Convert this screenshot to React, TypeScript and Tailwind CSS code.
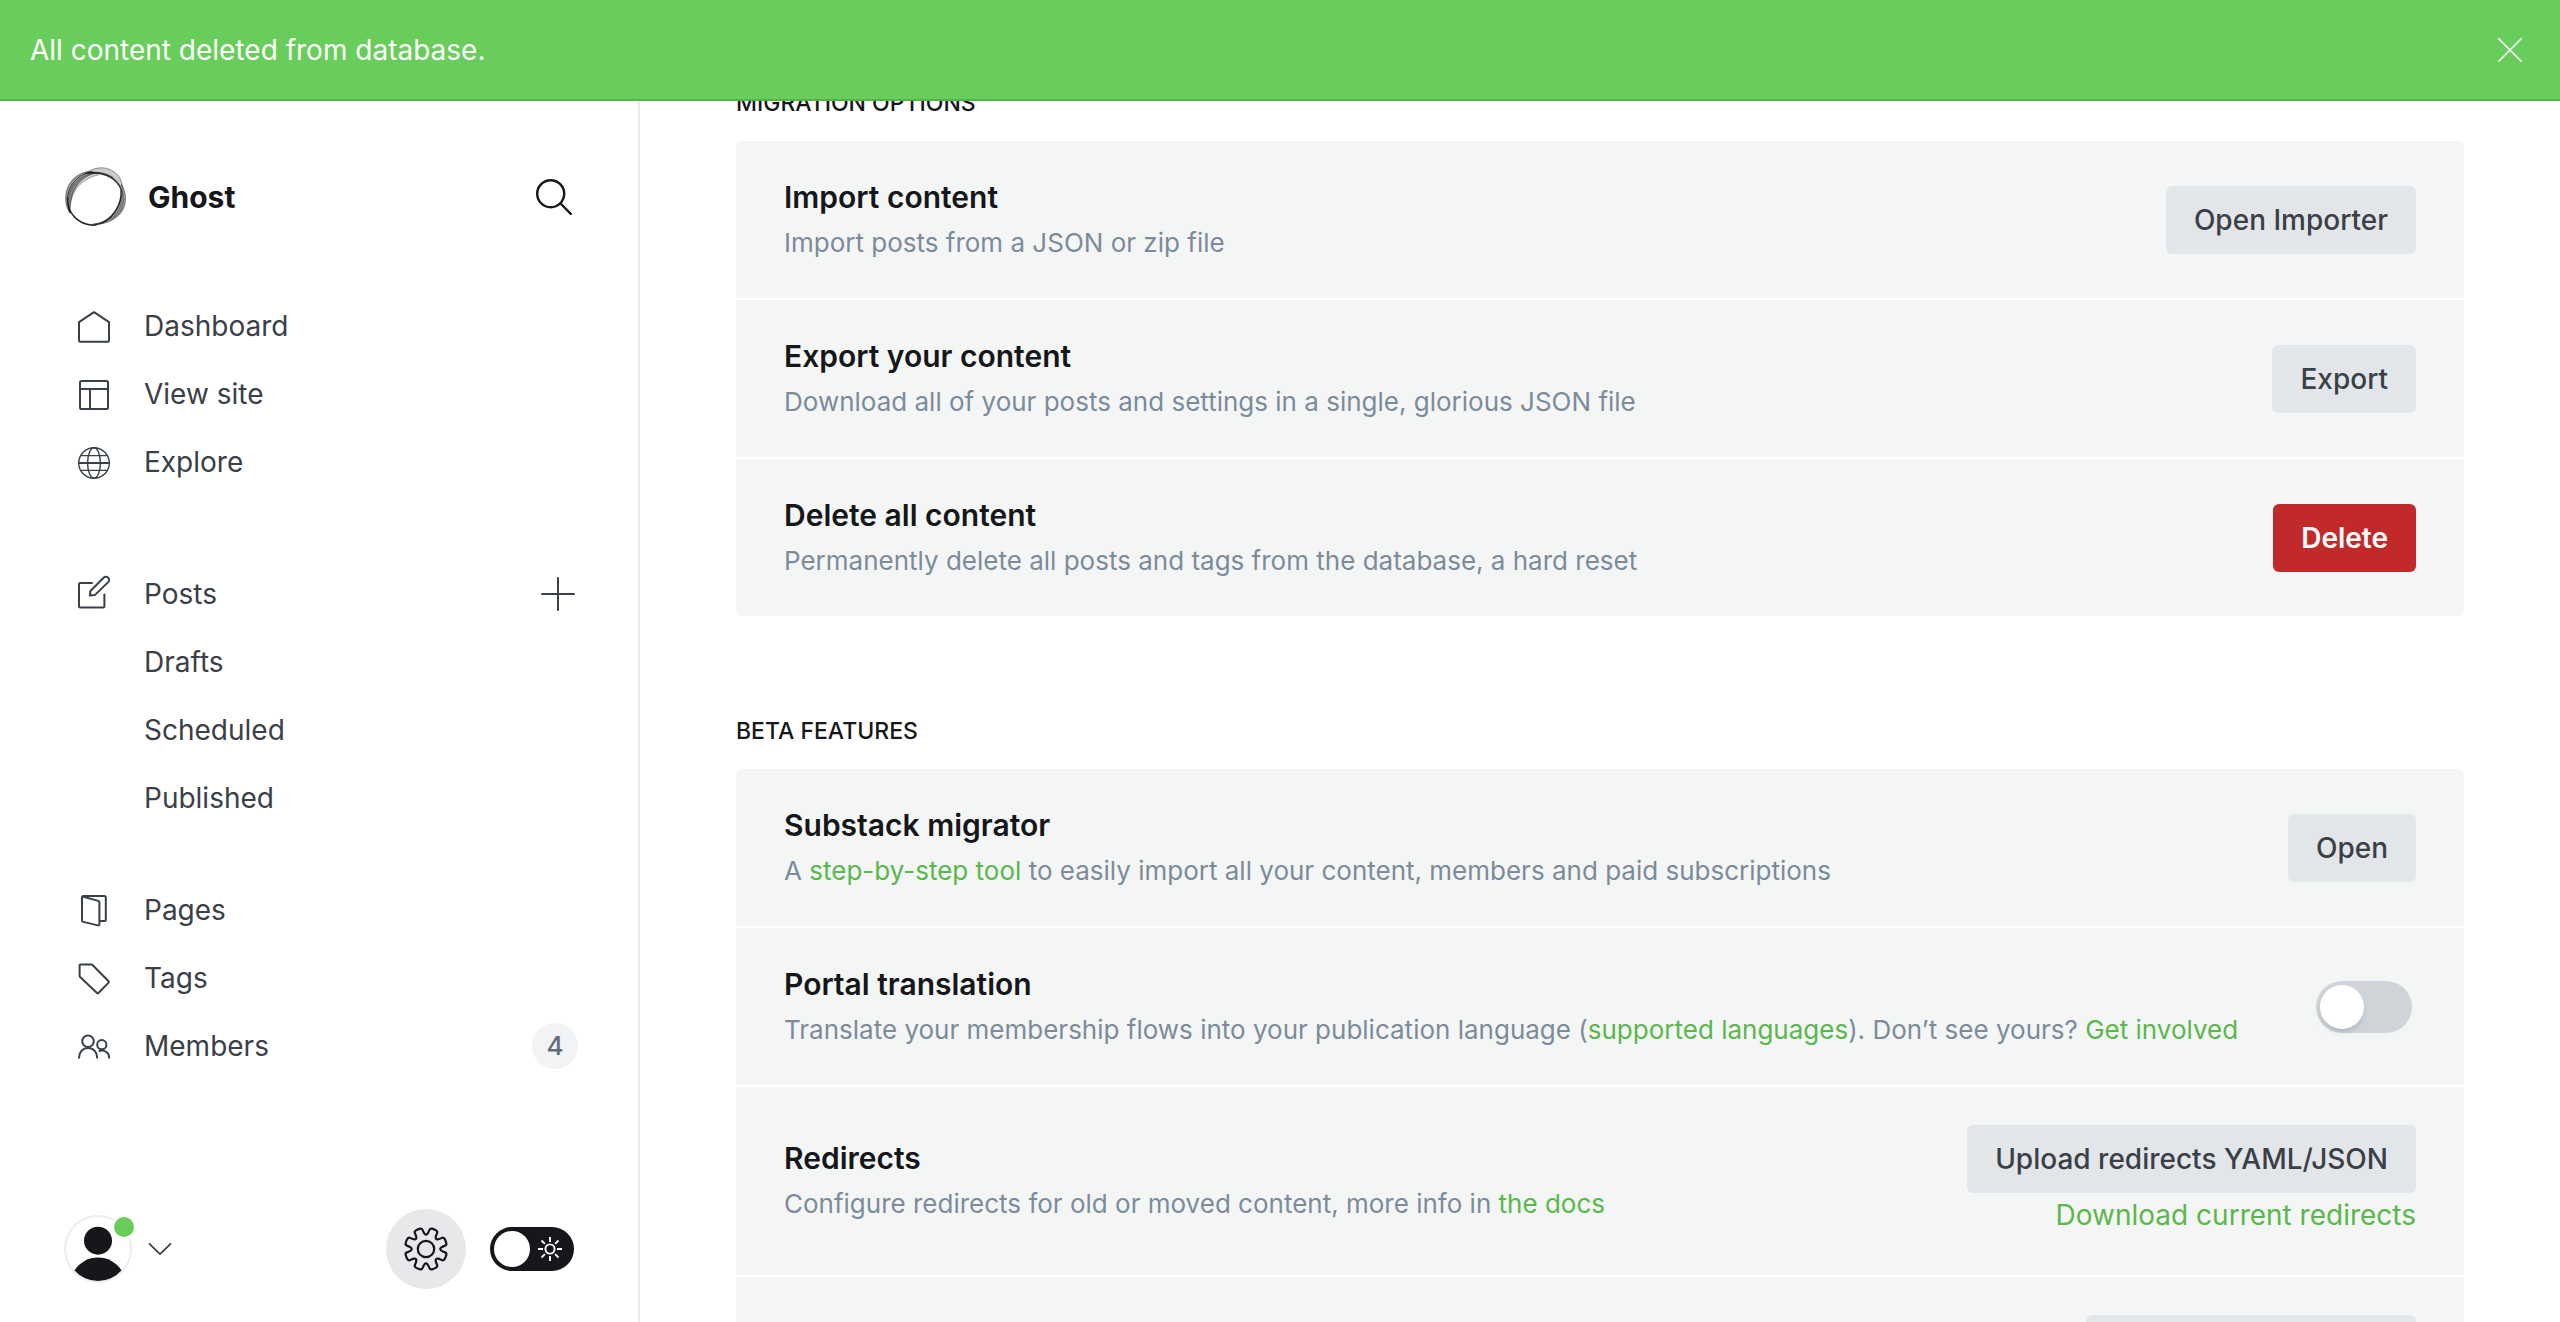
import React, { useState } from "react";

type IconProps = { children: React.ReactNode };

function NavIcon({ children }: IconProps) {
  return (
    <svg
      viewBox="0 0 32 32"
      className="size-8 shrink-0 overflow-visible"
      fill="none"
      stroke="currentColor"
      strokeWidth="2"
      strokeLinecap="round"
      strokeLinejoin="round"
      aria-hidden="true"
    >
      {children}
    </svg>
  );
}

const HomeIcon = (
  <NavIcon>
    <path d="M16 2.2 31 12.2V30.6a1.2 1.2 0 0 1-1.2 1.2H2.2A1.2 1.2 0 0 1 1 30.6V12.2Z" />
  </NavIcon>
);
const LayoutIcon = (
  <NavIcon>
    <rect x="2" y="3" width="28" height="28" rx="1.6" />
    <path d="M2 11h28M12 11v20" />
  </NavIcon>
);
const GlobeIcon = (
  <NavIcon>
    <g strokeWidth="1.4">
      <circle cx="16" cy="17" r="15.3" />
      <ellipse cx="16" cy="17" rx="6.4" ry="15.3" />
      <path d="M2.6 9.6h26.8M2.6 24.4h26.8" />
    </g>
    <path d="M.8 17h30.4" />
  </NavIcon>
);
const EditIcon = (
  <NavIcon>
    <path d="M14 5H2.2A1.2 1.2 0 0 0 1 6.2v22a1.2 1.2 0 0 0 1.2 1.2h23a1.2 1.2 0 0 0 1.2-1.2V16.6" />
    <path d="M11.8 17.6l.6-4.6L25.6-.3a3.1 3.1 0 0 1 4.6 4.4L16.8 17.1Z" />
  </NavIcon>
);
const PagesIcon = (
  <NavIcon>
    <path d="M5.4 2.8 20.2 6.9a1.6 1.6 0 0 1 1.2 1.5v22a1.1 1.1 0 0 1-1.4 1L5.2 27.9A1.6 1.6 0 0 1 4 26.3V3.6A1.6 1.6 0 0 1 5.6 2h20.6a1.6 1.6 0 0 1 1.6 1.6v21.8a1.6 1.6 0 0 1-1.6 1.6h-4.6" />
  </NavIcon>
);
const TagIcon = (
  <NavIcon>
    <path d="M2.6 2.5h10.8a1.5 1.5 0 0 1 1.1.5L30.6 19.2a1 1 0 0 1 0 1.4L20.4 31a1 1 0 0 1-1.4 0L2.1 15a1.5 1.5 0 0 1-.5-1.1V3.5a1 1 0 0 1 1-1Z" />
  </NavIcon>
);
const MembersIcon = (
  <NavIcon>
    <circle cx="10" cy="11.3" r="5.8" />
    <circle cx="23.8" cy="14.7" r="4.6" />
    <path d="M1 27.7c0-5.6 3.9-9.6 9.1-9.6s9.1 4 9.1 9.6M21.4 20.9c5.4-1.2 9.7 1.8 9.7 6.8" />
  </NavIcon>
);

function SiteLogo() {
  return (
    <svg viewBox="0 0 64 64" className="size-16 shrink-0" fill="none" stroke="#15171a" strokeLinecap="round" aria-hidden="true">
      <g fill="#15171a" strokeWidth="0.7">
        {/* left crescent */}
        <path
          fillOpacity="0.42"
          strokeOpacity="0.7"
          d="M28 6.500C14 6 2 17 1.700 33c0 7 1.500 11 4.300 15C5 31 12 13 30 8.500Z"
        />
        <path
          fillOpacity="0.22"
          strokeOpacity="0.5"
          d="M31 8C14 10 4 22 4 38c0 3 .5 6 2 10C5.500 31 13 15 34 10Z"
        />
        {/* upper right lobe */}
        <path
          fillOpacity="0.22"
          strokeOpacity="0.6"
          d="M21 8.500C30 2 40 1 48 5.500c7 4 10 9 10 17C50 11 38 6.500 21 8.500Z"
        />
        {/* lower right lobe */}
        <path
          fillOpacity="0.42"
          strokeOpacity="0.6"
          d="M58 20c6 11 4 22-2 29-7 7-16 11-27 10 14-1 30-13 29-39Z"
        />
        <path
          fillOpacity="0.15"
          strokeOpacity="0.4"
          d="M57.500 24c2 13-2 23-11 31 10-5 17-15 11-31Z"
        />
      </g>
      <path strokeWidth="1.500" strokeOpacity="0.85" d="M24 7.800c13-.6 27 3 33 16.200 1.500 14-8 34-27 36C14 60 3 48 3.500 33" />
      <path strokeWidth="1" strokeOpacity="0.7" d="M3.500 33C4 22 12 10 26 7.500c8-1 17 1 23 5M5 44c6 11 15 17 27 16.500" />
    </svg>
  );
}

/* Eight-toothed outline, smoothed through the midpoints of its corner points. */
function gearPath() {
  const pts: [number, number][] = [];
  for (let i = 0; i < 8; i++) {
    const mid = 22.5 + i * 45;
    const corners: [number, number][] = [
      [16.4, mid - 14],
      [21.2, mid - 12],
      [21.4, mid],
      [21.2, mid + 12],
      [16.4, mid + 14],
      [13.6, mid + 22.5],
    ];
    corners.forEach(([r, deg]) => {
      const a = (deg * Math.PI) / 180;
      pts.push([20 + r * Math.sin(a), 20 - r * Math.cos(a)]);
    });
  }
  const half = (a: [number, number], b: [number, number]) =>
    `${((a[0] + b[0]) / 2).toFixed(2)} ${((a[1] + b[1]) / 2).toFixed(2)}`;
  let d = `M${half(pts[pts.length - 1], pts[0])}`;
  pts.forEach((p, i) => {
    d += `Q${p[0].toFixed(2)} ${p[1].toFixed(2)} ${half(p, pts[(i + 1) % pts.length])}`;
  });
  return d + "Z";
}
const GEAR = gearPath();

function NavItem({ icon, label, children }: { icon?: React.ReactNode; label: string; children?: React.ReactNode }) {
  return (
    <li className="flex h-[68px] items-center pl-[14px]">
      <a href="#" className="flex flex-1 items-center gap-[34px]">
        {icon ?? <span className="w-8 shrink-0" />}
        {label}
      </a>
      {children}
    </li>
  );
}

function Sidebar() {
  const [night, setNight] = useState(false);
  return (
    <aside className="flex h-full w-[640px] shrink-0 flex-col border-r-2 border-[#e6e8ea] pt-[165px] pb-[33px] pl-16 text-[#394047]">
      <div className="flex items-center gap-5 pr-16">
        <SiteLogo />
        <span className="flex-1 text-[30px] font-bold text-[#15171a]">Ghost</span>
        <button type="button" aria-label="Search" className="flex size-10 items-center justify-center text-[#15171a]">
          <svg viewBox="0 0 36 36" className="size-9" fill="none" stroke="currentColor" strokeWidth="2.4" strokeLinecap="round">
            <circle cx="14.700" cy="14.700" r="13.500" />
            <path d="M24.500 24.500 34.800 34.800" />
          </svg>
        </button>
      </div>

      <nav className="mt-[63px] pr-[60px] text-[28px] leading-10">
        <ul>
          <NavItem icon={HomeIcon} label="Dashboard" />
          <NavItem icon={LayoutIcon} label="View site" />
          <NavItem icon={GlobeIcon} label="Explore" />
        </ul>
        <ul className="mt-16">
          <NavItem icon={EditIcon} label="Posts">
            <button type="button" aria-label="New post" className="flex size-10 items-center justify-center">
              <svg viewBox="0 0 34 34" className="size-[34px]" fill="none" stroke="currentColor" strokeWidth="2" strokeLinecap="round">
                <path d="M17 1v32M1 17h32" />
              </svg>
            </button>
          </NavItem>
          <NavItem label="Drafts" />
          <NavItem label="Scheduled" />
          <NavItem label="Published" />
        </ul>
        <ul className="mt-11">
          <NavItem icon={PagesIcon} label="Pages" />
          <NavItem icon={TagIcon} label="Tags" />
          <NavItem icon={MembersIcon} label="Members">
            <span className="flex size-[46px] items-center justify-center rounded-full bg-[#f1f3f4] text-[26px] font-medium text-[#626d79]">
              4
            </span>
          </NavItem>
        </ul>
      </nav>

      <div className="mt-auto flex items-center pr-16">
        <button type="button" aria-label="Account menu" className="flex items-center gap-4">
          <span className="relative">
            <svg viewBox="0 0 68 68" className="size-[68px]" aria-hidden="true">
              <circle cx="34" cy="34" r="33" fill="#fff" stroke="#ebedee" strokeWidth="2" />
              <circle cx="34" cy="25.700" r="14" fill="#15171a" />
              <path d="M10.500 55.500A27.700 27.700 0 0 1 57.500 55.500A31.500 31.500 0 0 1 10.500 55.500Z" fill="#15171a" />
            </svg>
            <span className="absolute top-0 -right-1 size-6 rounded-full border-2 border-white bg-[#69cd5b]" />
          </span>
          <svg viewBox="0 0 24 12" className="h-3 w-6" fill="none" stroke="#394047" strokeWidth="1.700" strokeLinecap="round" strokeLinejoin="round" aria-hidden="true">
            <path d="M1.500 .8 12 11.200 22.500 .8" />
          </svg>
        </button>
        <a href="#" aria-label="Settings" className="ml-auto flex size-20 items-center justify-center rounded-full bg-[#e7e8ea]">
          <svg viewBox="0 0 40 40" className="size-10 overflow-visible" fill="none" stroke="#15171a" strokeWidth="2.200" strokeLinejoin="round">
            <path d={GEAR} />
            <circle cx="20" cy="20" r="8.200" />
          </svg>
        </a>
        <label className="relative ml-6 flex h-11 w-[84px] items-center justify-between rounded-full bg-[#15171a] pr-3 pl-1">
          <input
            type="checkbox"
            aria-label="Night mode"
            checked={night}
            onChange={() => setNight(!night)}
            className="absolute inset-0 size-full cursor-pointer appearance-none"
          />
          <span className="size-9 rounded-full bg-white" />
          <svg viewBox="0 0 24 24" className="size-6" fill="none" stroke="#fff" strokeWidth="1.900" aria-hidden="true">
            <circle cx="12" cy="12" r="4.600" />
            <path d="M12 0v5M12 19v5M0 12h5M19 12h5M3.500 3.500l3.400 3.400M17.100 17.100l3.400 3.400M3.500 20.500l3.400-3.400M17.100 6.900l3.400-3.400" />
          </svg>
        </label>
      </div>
    </aside>
  );
}

function Section({ title, children }: { title: string; children: React.ReactNode }) {
  return (
    <section>
      <h2 className="mb-6 text-[23px] leading-7 font-medium text-[#15171a] uppercase">{title}</h2>
      <div className="flex flex-col gap-0.5 overflow-hidden rounded-md">{children}</div>
    </section>
  );
}

function Row({ title, text, children }: { title: string; text: React.ReactNode; children: React.ReactNode }) {
  return (
    <div className="flex min-h-[157px] items-center justify-between gap-12 bg-[#f4f6f6] px-12 py-8">
      <div>
        <h3 className="text-[30px] leading-[46px] font-semibold text-[#15171a]">{title}</h3>
        <p className="text-[26px] leading-[46px] text-[#7c8b9a]">{text}</p>
      </div>
      <div className="flex shrink-0 flex-col items-end py-1.5">{children}</div>
    </div>
  );
}

function Button({ children, danger = false }: { children: React.ReactNode; danger?: boolean }) {
  return (
    <button
      type="button"
      className={
        "h-[68px] rounded-md px-7 text-[28px] " +
        (danger ? "bg-[#c22a2a] font-semibold text-white" : "bg-[#e3e6e9] font-medium text-[#394047]")
      }
    >
      {children}
    </button>
  );
}

function Link({ children }: { children: React.ReactNode }) {
  return (
    <a href="#" className="text-[#5ab74c]">
      {children}
    </a>
  );
}

export default function App() {
  const [translate, setTranslate] = useState(false);
  return (
    <div className="relative flex h-screen overflow-hidden bg-white font-['Inter',sans-serif]">
      <div
        role="status"
        className="absolute inset-x-0 top-0 z-10 flex h-[101px] items-center justify-between border-b-2 border-[#56b249] bg-[#69cd5b] pr-9 pl-[30px] text-[28px] text-white"
      >
        <span>All content deleted from database.</span>
        <button type="button" aria-label="Close" className="flex size-7 items-center justify-center">
          <svg viewBox="0 0 24 24" className="size-6" fill="none" stroke="currentColor" strokeWidth="1.600" strokeLinecap="round">
            <path d="M.8 .8 23.200 23.200M23.200 .8 .8 23.200" />
          </svg>
        </button>
      </div>

      <Sidebar />

      <main className="flex min-w-0 flex-1 flex-col gap-[101px] px-24 pt-[89px]">
        <Section title="Migration options">
          <Row title="Import content" text="Import posts from a JSON or zip file">
            <Button>Open Importer</Button>
          </Row>
          <Row
            title="Export your content"
            text="Download all of your posts and settings in a single, glorious JSON file"
          >
            <Button>Export</Button>
          </Row>
          <Row title="Delete all content" text="Permanently delete all posts and tags from the database, a hard reset">
            <Button danger>Delete</Button>
          </Row>
        </Section>

        <Section title="Beta features">
          <Row
            title="Substack migrator"
            text={
              <>
                A <Link>step-by-step tool</Link> to easily import all your content, members and paid subscriptions
              </>
            }
          >
            <Button>Open</Button>
          </Row>
          <Row
            title="Portal translation"
            text={
              <>
                Translate your membership flows into your publication language (<Link>supported languages</Link>).
                Don’t see yours? <Link>Get involved</Link>
              </>
            }
          >
            <input
              type="checkbox"
              role="switch"
              aria-label="Portal translation"
              checked={translate}
              onChange={() => setTranslate(!translate)}
              className="mr-1 h-[52px] w-24 cursor-pointer appearance-none rounded-full bg-[#ced4d8] p-1 before:block before:size-11 before:rounded-full before:bg-white before:shadow-md before:content-[''] checked:bg-[#69cd5b] checked:before:ml-auto"
            />
          </Row>
          <Row
            title="Redirects"
            text={
              <>
                Configure redirects for old or moved content, more info in <Link>the docs</Link>
              </>
            }
          >
            <Button>Upload redirects YAML/JSON</Button>
            <span className="text-[28px] leading-[44px]">
              <Link>Download current redirects</Link>
            </span>
          </Row>
          <Row
            title="Routes"
            text={
              <>
                Configure dynamic routing by modifying the routes.yaml file, more info in <Link>the docs</Link>
              </>
            }
          >
            <Button>Upload routes YAML</Button>
            <span className="text-[28px] leading-[44px]">
              <Link>Download current routes.yaml</Link>
            </span>
          </Row>
        </Section>
      </main>
    </div>
  );
}
